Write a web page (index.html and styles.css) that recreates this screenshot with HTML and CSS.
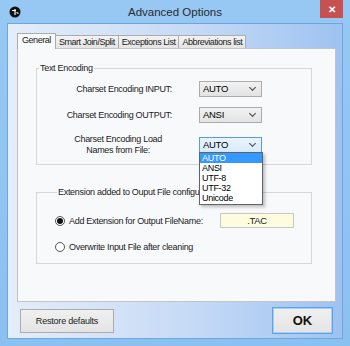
FILE: index.html
```html
<!DOCTYPE html>
<html lang="en">
<head>
    <meta charset="UTF-8">
    <title>Advanced Options</title>
    <link rel="stylesheet" href="styles.css">
</head>
<body>
    <div class="window">
        <div class="titlebar">
            <svg class="app-icon" viewBox="0 0 12 12">
                <circle cx="6" cy="6" r="5.5" fill="#111"/>
                <path d="M3 4.5h4M6 3v6M7.5 6.5l2 1" stroke="#fff" stroke-width="1.2" fill="none"/>
            </svg>
            <div class="title">Advanced Options</div>
            <div class="close">&#x2715;</div>
        </div>

        <div class="client">
            <div class="tabs">
                <div class="tab active">General</div>
                <div class="tab">Smart Join/Split</div>
                <div class="tab">Exceptions List</div>
                <div class="tab">Abbreviations list</div>
            </div>

            <div class="tab-page">
                <fieldset class="group encoding">
                    <legend>Text Encoding</legend>
                    <div class="enc-grid">
                        <label>Charset Encoding INPUT:</label>
                        <div class="combo">AUTO</div>

                        <label>Charset Encoding OUTPUT:</label>
                        <div class="combo">ANSI</div>

                        <label class="two-lines">Charset Encoding Load<br>Names from File:</label>
                        <div class="combo open">
                            AUTO
                            <ul class="combo-list">
                                <li class="selected">AUTO</li>
                                <li>ANSI</li>
                                <li>UTF-8</li>
                                <li>UTF-32</li>
                                <li>Unicode</li>
                            </ul>
                        </div>
                    </div>
                </fieldset>

                <fieldset class="group extension">
                    <legend>Extension added to Ouput File configuration</legend>
                    <div class="radio-row">
                        <span class="radio checked"></span>
                        <span class="radio-text">Add Extension for Output FileName:</span>
                        <div class="textbox">.TAC</div>
                    </div>
                    <div class="radio-row">
                        <span class="radio"></span>
                        <span class="radio-text">Overwrite Input File after cleaning</span>
                    </div>
                </fieldset>
            </div>

            <div class="buttons">
                <button class="btn restore">Restore defaults</button>
                <button class="btn ok">OK</button>
            </div>
        </div>
    </div>
</body>
</html>
```

FILE: styles.css
```css
* {
    margin: 0;
    padding: 0;
    box-sizing: border-box;
}

body {
    width: 350px;
    height: 346px;
    overflow: hidden;
    font-family: 'Liberation Sans', Arial, sans-serif;
    font-size: 9px;
    color: #1b1b1b;
    background-color: #8fc4f2;
}

.window {
    width: 350px;
    height: 346px;
    display: flex;
    flex-direction: column;
    background: linear-gradient(#96c8f3, #8bc1f0);
}

.titlebar {
    height: 23px;
    display: grid;
    grid-template-columns: 1fr auto 1fr;
    align-items: center;
}

.app-icon {
    width: 12px;
    height: 12px;
    margin-left: 9px;
}

.title {
    font-size: 11.5px;
    color: #2b2b2b;
    padding-top: 1px;
}

.close {
    justify-self: end;
    align-self: start;
    width: 23px;
    height: 18px;
    margin-right: 7px;
    background-color: #c75050;
    color: #fff;
    font-size: 10px;
    font-weight: bold;
    display: flex;
    align-items: center;
    justify-content: center;
}

.client {
    height: 316px;
    margin: 0 7px 7px;
    padding: 9px 6px 0 9px;
    border: 1px solid #6fa6dc;
    background: linear-gradient(to right, #e4edf9, #c6daf6 55%, #9ec3f1);
    display: flex;
    flex-direction: column;
}

/* tab strip */
.tabs {
    height: 15px;
    display: flex;
    align-items: flex-end;
    position: relative;
    z-index: 1;
    letter-spacing: -0.45px;
}

.tab {
    height: 13px;
    padding: 0 3px;
    margin-right: -1px;
    border: 1px solid #acacac;
    border-bottom: none;
    background: linear-gradient(#f3f3f3, #e4e4e4);
    line-height: 12px;
}

.tab.active {
    height: 16px;
    margin-bottom: -1px;
    padding: 0 4px;
    background: #f8f9fb;
    line-height: 13px;
}

.tab-page {
    height: 254px;
    padding: 0 0 0 18px;
    border: 1px solid #c4c4c4;
    background-color: #f8f9fb;
    position: relative;
}

/* group boxes */
.group {
    width: 276px;
    border: 1px solid #d6d6d6;
    letter-spacing: -0.3px;
}

.group legend {
    margin-left: 2px;
    padding: 0 1px;
    line-height: 11px;
}

.encoding {
    margin-top: 14px;
    height: 102px;
    padding: 7px 0 0 0;
}

.enc-grid {
    display: grid;
    grid-template-columns: 135px 63px;
    column-gap: 27px;
    row-gap: 10px;
    align-items: center;
}

.enc-grid label {
    text-align: right;
    line-height: 11px;
}

.enc-grid .two-lines {
    justify-self: end;
    margin-right: 10px;
    text-align: center;
    margin-top: 1px;
}

.combo {
    height: 16px;
    padding: 0 0 0 3px;
    border: 1px solid #acacac;
    background: linear-gradient(#f2f2f2, #e3e3e3);
    font-size: 9.5px;
    line-height: 14px;
    color: #000;
    position: relative;
}

.combo::after {
    content: '';
    position: absolute;
    right: 6px;
    top: 3px;
    width: 4px;
    height: 4px;
    border-right: 1.5px solid #444;
    border-bottom: 1.5px solid #444;
    transform: rotate(45deg);
}

.combo.open {
    border-color: #569de5;
    background: linear-gradient(#eaf3fc, #d9eafb);
}

.combo-list {
    list-style: none;
    position: absolute;
    left: -1px;
    top: 14px;
    width: 64px;
    padding: 0 0 1px;
    border: 1px solid #646464;
    background-color: #fff;
    box-shadow: 2px 2px 3px rgba(0, 0, 0, 0.25);
    font-size: 9px;
    z-index: 2;
}

.combo-list li {
    height: 10px;
    line-height: 10px;
    padding-left: 2px;
}

.combo-list li.selected {
    background-color: #3399ff;
    color: #fff;
}

.extension {
    margin-top: 22px;
    height: 77px;
    padding: 15px 0 0 18px;
}

.radio-row {
    height: 15px;
    display: flex;
    align-items: center;
    margin-bottom: 11px;
}

.radio {
    width: 10px;
    height: 10px;
    border: 1px solid #555;
    border-radius: 50%;
    background-color: #fff;
    display: flex;
    align-items: center;
    justify-content: center;
}

.radio.checked::after {
    content: '';
    width: 6px;
    height: 6px;
    border-radius: 50%;
    background-color: #111;
}

.radio-text {
    margin-left: 4px;
    width: 151px;
}

.textbox {
    width: 74px;
    height: 15px;
    border: 1px solid #c8c8c8;
    background-color: #fdfcdf;
    text-align: center;
    line-height: 13px;
    font-size: 9.5px;
}

/* bottom buttons */
.buttons {
    margin-top: 5px;
    padding: 0 3px;
    display: flex;
    justify-content: space-between;
    align-items: center;
    height: 27px;
}

.btn {
    font-family: inherit;
    color: #1b1b1b;
    border: 1px solid #acacac;
    background: linear-gradient(#f0f0f0, #e4e4e4);
}

.restore {
    width: 94px;
    height: 24px;
    font-size: 9px;
    letter-spacing: -0.2px;
}

.ok {
    width: 61px;
    height: 27px;
    border-color: #5aa2ea;
    box-shadow: inset 0 0 0 1px #a8d0f6;
    font-size: 13px;
    font-weight: bold;
    color: #111;
}
```
